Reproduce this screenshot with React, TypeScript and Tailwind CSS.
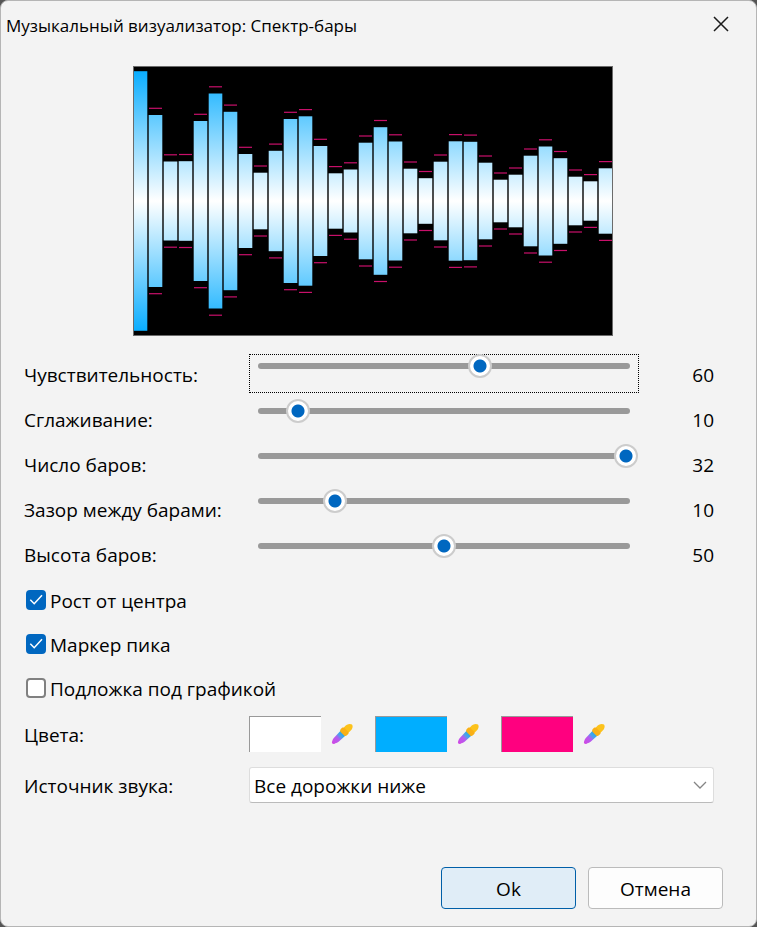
import React, { useId, useState } from 'react';

// half height of every spectrum bar, in canvas units
const LEVELS = [
  129.8, 86, 39.5, 39.8, 80, 107.5, 89.2, 47, 28.3, 50.2, 82, 84.7, 55, 27.7, 31.5, 58.3,
  73.8, 59.5, 32.3, 22.8, 39.3, 59.7, 59.2, 38.3, 21.3, 26.3, 45.3, 54.5, 42.8, 24.3, 19.7, 32.7,
];

const Spectrum: React.FC = () => (
  <svg viewBox="0 0 480 270" width="480" height="270" className="max-w-full" role="img">
    <defs>
      <linearGradient id="bars" gradientUnits="userSpaceOnUse" x1="0" y1="0" x2="0" y2="270">
        <stop offset="0" stopColor="#0af" />
        <stop offset="0.5" stopColor="#fff" />
        <stop offset="1" stopColor="#0af" />
      </linearGradient>
    </defs>
    <rect width="480" height="270" fill="#000" />
    {LEVELS.map((level, i) => (
      <g key={i}>
        <rect x={i * 15 + 0.7} y={135 - level} width="13.6" height={level * 2} fill="url(#bars)" />
        <rect x={i * 15 + 1} y={135 - level - 7.3} width="13" height="1.2" fill="#c8106a" />
        <rect x={i * 15 + 1} y={135 + level + 6.1} width="13" height="1.2" fill="#c8106a" />
      </g>
    ))}
    <rect x="0.5" y="0.5" width="479" height="269" fill="none" stroke="#6b6b6b" />
  </svg>
);

interface SliderRowProps {
  label: string;
  initial: number;
  max: number;
  focused?: boolean;
}

const SliderRow: React.FC<SliderRowProps> = ({ label, initial, max, focused }) => {
  const id = useId();
  const [value, setValue] = useState(initial);

  return (
    <div className="flex h-[45px]">
      <label htmlFor={id} className="w-[225px] shrink-0 leading-[45px]">{label}</label>
      <div className={`mt-px grid h-[39px] flex-1 border border-dotted ${focused ? 'border-black' : 'border-transparent'}`}>
        <span className="mx-2 mt-2 h-[6px] rounded-full bg-[#999] [grid-area:1/1]" />
        <input
          id={id}
          type="range"
          min={0}
          max={max}
          value={value}
          onChange={(e) => setValue(Number(e.target.value))}
          className="h-[22px] w-full appearance-none bg-transparent outline-none [grid-area:1/1] [&::-webkit-slider-thumb]:size-6 [&::-webkit-slider-thumb]:appearance-none [&::-webkit-slider-thumb]:rounded-full [&::-webkit-slider-thumb]:border-2 [&::-webkit-slider-thumb]:border-[#ccc] [&::-webkit-slider-thumb]:bg-white [&::-webkit-slider-thumb]:bg-[radial-gradient(circle,#0067c0_6px,#fff_7px)]"
        />
      </div>
      <output htmlFor={id} className="w-[75px] shrink-0 text-right leading-[45px]">{value}</output>
    </div>
  );
};

interface CheckRowProps {
  label: string;
  initial?: boolean;
}

const CheckRow: React.FC<CheckRowProps> = ({ label, initial = false }) => {
  const [checked, setChecked] = useState(initial);

  return (
    <label className="flex h-11 items-center gap-1 pl-[2px]">
      <span className="grid size-5 shrink-0">
        <input
          type="checkbox"
          checked={checked}
          onChange={(e) => setChecked(e.target.checked)}
          className="size-5 appearance-none rounded-[4px] border-2 border-[#808080] bg-white checked:border-[#0067c0] checked:bg-[#0067c0] [grid-area:1/1]"
        />
        {checked && (
          <svg viewBox="0 0 20 20" className="pointer-events-none size-5 [grid-area:1/1]" fill="none" stroke="#fff" strokeWidth="1.5">
            <path d="M4.3 9.8 8.2 13.7 16 5.3" />
          </svg>
        )}
      </span>
      <span className="pt-[2px]">{label}</span>
    </label>
  );
};

const Dropper: React.FC = () => {
  const id = useId();
  return (
    <svg viewBox="0 0 22 22" className="size-[22px]">
      <defs>
        <linearGradient id={id} gradientUnits="userSpaceOnUse" x1="14" y1="8" x2="2" y2="20">
          <stop offset="0.1" stopColor="#1aa7ea" />
          <stop offset="0.4" stopColor="#4aa4ea" />
          <stop offset="0.6" stopColor="#b35cf0" />
          <stop offset="1" stopColor="#cf4ae4" />
        </linearGradient>
      </defs>
      <path d="M9.8 7.6 14.6 12.4 7.6 18.8C6 20.2 4.6 20 3.6 20.8 2.5 21.6.4 20.6 1 18.8 1.4 17.6 1.6 16.4 2.8 15Z" fill={`url(#${id})`} />
      <path d="M13.8 3.4C15.4 1 19.4.2 21 1.6 22.4 3.3 21.4 6.8 18.8 8.4L15.8 11 11 6.2Z" fill="#fcc21b" />
      <path d="M10.8 5C11.8 4.2 12.8 4.4 13.5 5.1L17.1 8.7C17.8 9.4 17.8 10.6 17 11.3L15.6 12.6C14.8 13.2 13.8 13.1 13.1 12.4L9.6 8.9C8.9 8.2 9 7 9.6 6.2Z" fill="#f9b016" />
    </svg>
  );
};

const COLORS = ['bg-white', 'bg-[#00aeff]', 'bg-[#ff007f]'];

const App: React.FC = () => (
  <div className="min-h-screen bg-[#555]">
    <main className="flex min-h-screen flex-col rounded-lg border border-[#b5b5b5] bg-[#f3f3f3] font-['Open_Sans','Noto_Sans',sans-serif] text-[19px] text-black">
      <header className="flex h-[50px] items-center justify-between pr-[27px] pl-[5px]">
        <h1 className="text-[17px]">Музыкальный визуализатор: Спектр-бары</h1>
        <button type="button" aria-label="Закрыть" className="-mt-1">
          <svg viewBox="0 0 16 16" className="size-4" stroke="#1a1a1a" strokeWidth="1.5">
            <path d="M1 1 15 15M15 1 1 15" />
          </svg>
        </button>
      </header>

      <form className="flex flex-1 flex-col pt-[15px] pr-[33px] pb-[17px] pl-[23px]" onSubmit={(e) => e.preventDefault()}>
        <div className="flex justify-center pr-[2px]">
          <Spectrum />
        </div>

        <div className="mt-[17px] pr-[9px]">
          <SliderRow label="Чувствительность:" initial={60} max={100} focused />
          <SliderRow label="Сглаживание:" initial={10} max={100} />
          <SliderRow label="Число баров:" initial={32} max={32} />
          <SliderRow label="Зазор между барами:" initial={10} max={50} />
          <SliderRow label="Высота баров:" initial={50} max={100} />

          <CheckRow label="Рост от центра" initial />
          <CheckRow label="Маркер пика" initial />
          <CheckRow label="Подложка под графикой" />

          <div className="mt-[6px] flex h-9 items-center">
            <span className="w-[225px] pt-[2px]">Цвета:</span>
            <div className="flex gap-[22px]">
              {COLORS.map((color) => (
                <div key={color} className="flex items-center gap-[10px]">
                  <span className={`h-9 w-[72px] border-t border-l border-[#999] ${color}`} />
                  <button type="button" aria-label="Пипетка">
                    <Dropper />
                  </button>
                </div>
              ))}
            </div>
          </div>

          <div className="mt-[15px] flex h-9 items-center">
            <label htmlFor="source" className="w-[225px] shrink-0 pt-[2px]">Источник звука:</label>
            <div className="grid flex-1 items-center">
              <select id="source" className="h-9 w-full appearance-none rounded-[3px] border border-[#ddd] border-b-[#bbb] bg-white pt-[2px] pl-1 [grid-area:1/1]">
                <option>Все дорожки ниже</option>
              </select>
              <svg viewBox="0 0 14 8" className="pointer-events-none mr-[7px] h-2 w-[14px] justify-self-end [grid-area:1/1]" fill="none" stroke="#858585" strokeWidth="1.3">
                <path d="M1 1 7 7 13 1" />
              </svg>
            </div>
          </div>
        </div>

        <div className="mt-auto flex justify-end gap-3">
          <button type="submit" className="h-[42px] w-[135px] rounded-[4px] border border-[#005fa8] bg-[#e0edf7] pt-[2px]">Ok</button>
          <button type="button" className="h-[42px] w-[135px] rounded-[4px] border border-[#bbb] bg-[#fdfdfd] pt-[2px]">Отмена</button>
        </div>
      </form>
    </main>
  </div>
);

export default App;
